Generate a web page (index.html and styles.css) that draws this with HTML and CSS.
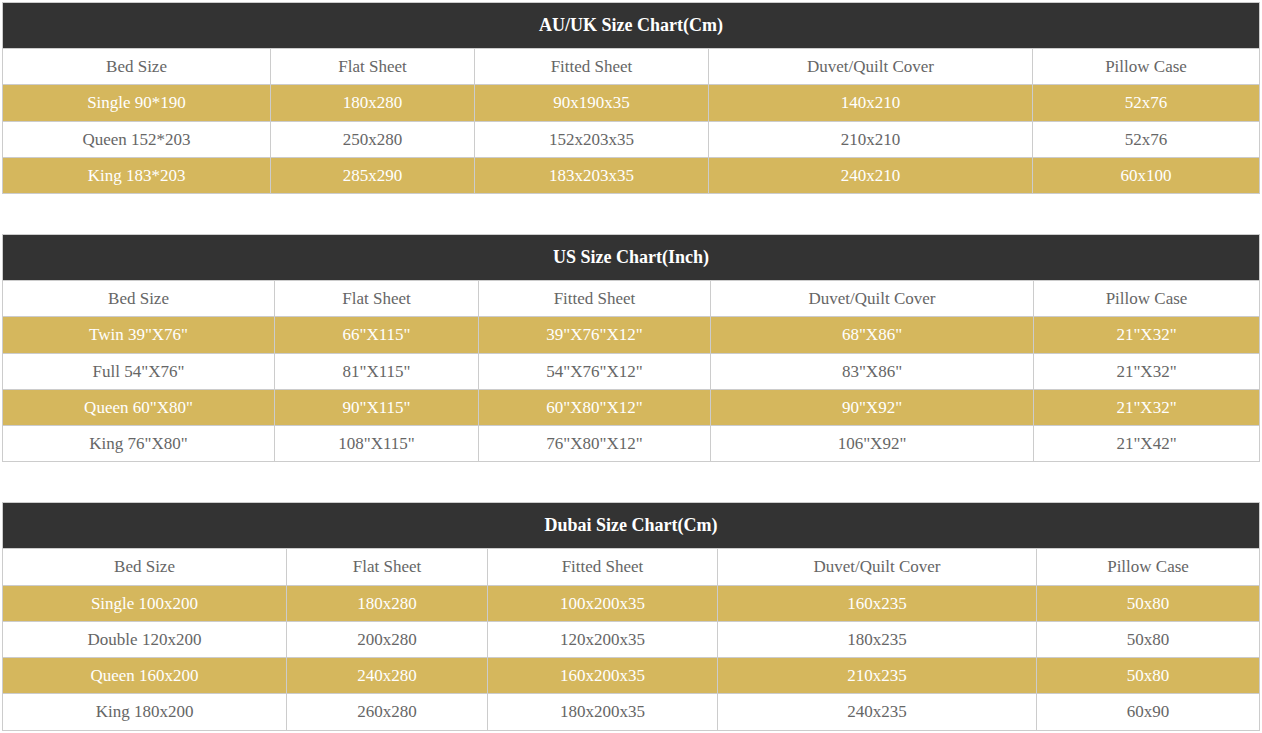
FILE: index.html
```html
<!DOCTYPE html>
<html>
<head>
<meta charset="utf-8">
<link rel="stylesheet" href="styles.css">
</head>
<body>
<div class="page">
<table class="chart t1">
  <colgroup><col class="c1"><col class="c2"><col class="c3"><col class="c4"><col class="c5"></colgroup>
  <tr><th class="title" colspan="5">AU/UK Size Chart(Cm)</th></tr>
  <tr class="head"><td>Bed Size</td><td>Flat Sheet</td><td>Fitted Sheet</td><td>Duvet/Quilt Cover</td><td>Pillow Case</td></tr>
  <tr class="gold"><td>Single 90*190</td><td>180x280</td><td>90x190x35</td><td>140x210</td><td>52x76</td></tr>
  <tr><td>Queen 152*203</td><td>250x280</td><td>152x203x35</td><td>210x210</td><td>52x76</td></tr>
  <tr class="gold"><td>King 183*203</td><td>285x290</td><td>183x203x35</td><td>240x210</td><td>60x100</td></tr>
</table>

<table class="chart t2">
  <colgroup><col class="c1"><col class="c2"><col class="c3"><col class="c4"><col class="c5"></colgroup>
  <tr><th class="title" colspan="5">US Size Chart(Inch)</th></tr>
  <tr class="head"><td>Bed Size</td><td>Flat Sheet</td><td>Fitted Sheet</td><td>Duvet/Quilt Cover</td><td>Pillow Case</td></tr>
  <tr class="gold"><td>Twin 39"X76"</td><td>66"X115"</td><td>39"X76"X12"</td><td>68"X86"</td><td>21"X32"</td></tr>
  <tr><td>Full 54"X76"</td><td>81"X115"</td><td>54"X76"X12"</td><td>83"X86"</td><td>21"X32"</td></tr>
  <tr class="gold"><td>Queen 60"X80"</td><td>90"X115"</td><td>60"X80"X12"</td><td>90"X92"</td><td>21"X32"</td></tr>
  <tr><td>King 76"X80"</td><td>108"X115"</td><td>76"X80"X12"</td><td>106"X92"</td><td>21"X42"</td></tr>
</table>

<table class="chart t3">
  <colgroup><col class="c1"><col class="c2"><col class="c3"><col class="c4"><col class="c5"></colgroup>
  <tr><th class="title" colspan="5">Dubai Size Chart(Cm)</th></tr>
  <tr class="head"><td>Bed Size</td><td>Flat Sheet</td><td>Fitted Sheet</td><td>Duvet/Quilt Cover</td><td>Pillow Case</td></tr>
  <tr class="gold"><td>Single 100x200</td><td>180x280</td><td>100x200x35</td><td>160x235</td><td>50x80</td></tr>
  <tr><td>Double 120x200</td><td>200x280</td><td>120x200x35</td><td>180x235</td><td>50x80</td></tr>
  <tr class="gold"><td>Queen 160x200</td><td>240x280</td><td>160x200x35</td><td>210x235</td><td>50x80</td></tr>
  <tr><td>King 180x200</td><td>260x280</td><td>180x200x35</td><td>240x235</td><td>60x90</td></tr>
</table>
</div>
</body>
</html>
```

FILE: styles.css
```css
html, body {
  margin: 0;
  padding: 0;
  background: #ffffff;
}
.page {
  padding: 2px 2px 0 2px;
  display: flex;
  flex-direction: column;
  gap: 40px;
}
.chart {
  width: 100%;
  border-collapse: collapse;
  table-layout: fixed;
  font-family: "Liberation Serif", "Times New Roman", serif;
  font-size: 17px;
}
.chart td, .chart th {
  border: 1px solid #cccccc;
  text-align: center;
  padding: 5px 4px;
  line-height: 25.25px;
  color: #666666;
  font-weight: normal;
}
.chart th.title {
  background: #333333;
  color: #ffffff;
  font-weight: bold;
  font-size: 18px;
  padding: 10px 4px;
  line-height: 25px;
}
.chart tr.gold td {
  background: #d5b75d;
  color: #ffffff;
}
.t1 .c1 { width: 268px; }
.t1 .c2 { width: 204px; }
.t1 .c3 { width: 234px; }
.t1 .c4 { width: 324px; }
.t1 .c5 { width: 227px; }
.t2 .c1 { width: 272px; }
.t2 .c2 { width: 204px; }
.t2 .c3 { width: 232px; }
.t2 .c4 { width: 323px; }
.t2 .c5 { width: 226px; }
.t3 .c1 { width: 284px; }
.t3 .c2 { width: 201px; }
.t3 .c3 { width: 230px; }
.t3 .c4 { width: 319px; }
.t3 .c5 { width: 223px; }
```
